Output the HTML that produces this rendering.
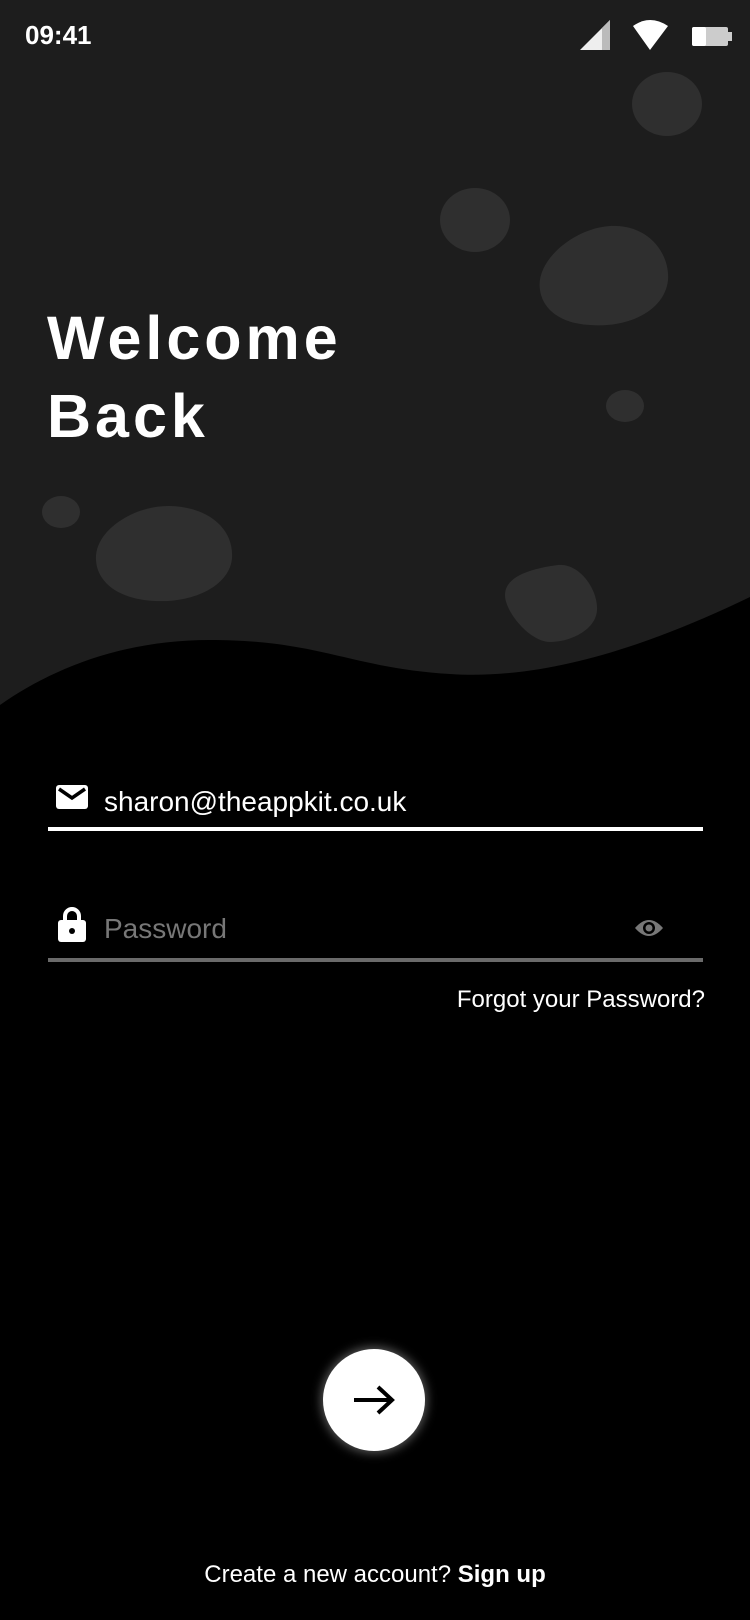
<!DOCTYPE html>
<html><head><style>
html,body{margin:0;padding:0}
body{width:750px;height:1620px;background:#000;position:relative;overflow:hidden;font-family:"Liberation Sans",sans-serif;color:#fff}
.a{position:absolute}
</style></head><body>
<svg class="a" style="left:0;top:0" width="750" height="760" viewBox="0 0 750 760">
<path d="M0 0H750V597C640 650 540 680 450 674C350 668 320 640 210 640C120 640 50 670 0 705Z" fill="#1d1d1d"/>
<g fill="#2f2f2f">
<ellipse cx="667" cy="104" rx="35" ry="32"/>
<ellipse cx="475" cy="220" rx="35" ry="32"/>
<path d="M540 290C535 260 575 228 610 226C650 224 670 255 668 280C665 310 630 328 590 325C555 323 542 305 540 290Z"/>
<ellipse cx="625" cy="406" rx="19" ry="16"/>
<ellipse cx="61" cy="512" rx="19" ry="16"/>
<path d="M96 560C94 530 135 505 170 506C210 507 234 530 232 558C230 585 195 603 155 601C115 599 97 580 96 560Z"/>
<path d="M505 595C505 575 535 568 558 565C580 563 598 590 597 610C596 630 570 642 550 642C530 642 505 612 505 595Z"/>
</g>
</svg>
<div class="a" style="left:25px;top:20px;font-size:26px;font-weight:bold;font-family:'Liberation Sans',sans-serif">09:41</div>
<svg class="a" style="left:578px;top:20px" width="160" height="30" viewBox="0 0 160 30">
<path d="M2 30L32 0V30Z" fill="#eee"/><path d="M24 8V30H32V0Z" fill="#bbb"/>
<path d="M55 6Q72 -6 90 6L72 30Z" fill="#fff"/>
<rect x="114" y="7" width="36" height="19" rx="2" fill="#ccc"/><rect x="114" y="7" width="14" height="19" rx="2" fill="#fff"/><rect x="150" y="12" width="4" height="9" fill="#ccc"/>
</svg>
<div class="a" style="left:47px;top:299px;font-size:61px;font-weight:bold;letter-spacing:4px;line-height:78px">Welcome<br>Back</div>
<svg class="a" style="left:56px;top:785px" width="32" height="24" viewBox="0 0 32 24"><rect width="32" height="24" rx="3" fill="#fff"/><path d="M3 4L16 13L29 4" stroke="#000" stroke-width="3.5" fill="none"/></svg>
<div class="a" style="left:104px;top:786px;font-size:28px">sharon@theappkit.co.uk</div>
<div class="a" style="left:48px;top:827px;width:655px;height:4px;background:#fff"></div>
<svg class="a" style="left:58px;top:906px" width="28" height="36" viewBox="0 0 28 36"><path d="M7 15V10A7 7 0 0 1 21 10V15" stroke="#fff" stroke-width="4" fill="none"/><rect x="0" y="14" width="28" height="22" rx="3" fill="#fff"/><circle cx="14" cy="25" r="3" fill="#000"/></svg>
<div class="a" style="left:104px;top:913px;font-size:28px;color:#777">Password</div>
<svg class="a" style="left:634px;top:918px" width="30" height="20" viewBox="0 0 30 20"><path d="M1 10Q15 -6 29 10Q15 26 1 10Z" fill="#777"/><circle cx="15" cy="10" r="6" fill="#000"/><circle cx="15" cy="10" r="3.5" fill="#777"/></svg>
<div class="a" style="left:48px;top:958px;width:655px;height:4px;background:#6a6a6a"></div>
<div class="a" style="right:45px;top:986px;font-size:24px">Forgot your Password?</div>
<div class="a" style="left:323px;top:1349px;width:102px;height:102px;border-radius:50%;background:#fff;box-shadow:0 0 10px 2px rgba(255,255,255,0.35)"></div>
<svg class="a" style="left:352px;top:1384px" width="44" height="32" viewBox="0 0 44 32"><path d="M2 16H40M26 3L40 16L26 29" stroke="#000" stroke-width="4" fill="none"/></svg>
<div class="a" style="left:0;width:750px;text-align:center;top:1561px;font-size:24px">Create a new account? <b>Sign up</b></div>
</body></html>
